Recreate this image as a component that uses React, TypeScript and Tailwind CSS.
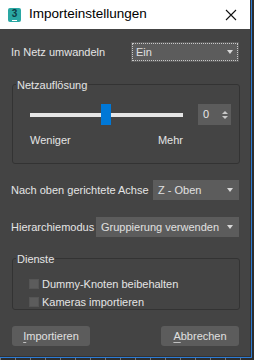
const label = "text-[11px] leading-[14px] text-[#e4e4e4]";

function Combo({ value, width, focus }: { value: string; width: string; focus?: boolean }) {
  return (
    <div
      className={`${width} h-[20px] bg-[#5c5c5c] flex items-center pl-[5px] pr-[6px] ${
        focus ? "outline outline-1 outline-dotted outline-[#c8c8c8] -outline-offset-2" : ""
      }`}
    >
      <span className="text-[11px] text-[#e0e0e0] flex-1 leading-none">{value}</span>
      <span className="w-0 h-0 border-l-[3px] border-r-[3px] border-t-[4px] border-l-transparent border-r-transparent border-t-[#d8d8d8]" />
    </div>
  );
}

function Mnemonic({ first, rest }: { first: string; rest: string }) {
  return (
    <span className="text-[11px] text-[#e0e0e0]">
      <span className="underline underline-offset-2 decoration-[#c0c0c0]">{first}</span>
      {rest}
    </span>
  );
}

function Check({ text }: { text: string }) {
  return (
    <label className="flex items-center gap-[3px] h-[14px]">
      <span className="w-[10px] h-[10px] bg-[#5c5c5c] border border-[#555]" />
      <span className={label}>{text}</span>
    </label>
  );
}

export default function App() {
  return (
    <div
      className="w-[254px] h-[360px] bg-[#2d2d2d] overflow-hidden relative"
      style={{ fontFamily: '"Liberation Sans", Arial, sans-serif' }}
    >
      <div className="w-[252px] h-[358px] border-r border-b border-[#2b7bd6]">
        <div className="w-[251px] h-[357px] border-r border-b border-[#333] flex flex-col">
          {/* title bar */}
          <div className="h-[29px] bg-white flex items-center pl-[8px] pr-[12px] shrink-0">
            <div className="w-[13px] h-[14px] rounded-[2px] bg-[#2aa7a3] flex flex-col items-center justify-center">
              <span className="text-[10px] font-bold text-[#0d3b44] leading-none">3</span>
              <span className="w-[5px] h-[1px] bg-white mt-[1px]" />
            </div>
            <span className="ml-[8px] text-[13.5px] text-black flex-1">Importeinstellungen</span>
            <svg width="12" height="12" viewBox="0 0 12 12" className="mr-[1px]">
              <path d="M1 1 L11 11 M11 1 L1 11" stroke="#111" strokeWidth="1.1" />
            </svg>
          </div>

          {/* body */}
          <div className="flex-1 bg-[#444444] pl-[11px] pr-[11px] pt-[13px]">
            <div className="flex items-center">
              <span className={label}>In Netz umwandeln</span>
              <div className="ml-auto">
                <Combo value="Ein" width="w-[108px]" focus />
              </div>
            </div>

            <div className="relative mt-[22px] ml-[1px] w-[228px] h-[80px] border border-[#333] rounded-[3px]">
              <span className={`absolute -top-[7px] left-[3px] px-[1px] bg-[#444444] ${label}`}>Netzauflösung</span>
              <div className="flex items-center mt-[19px] ml-[17px]">
                <div className="relative w-[153px] h-[21px] flex items-center">
                  <div className="w-full h-[4px] bg-[#e6e6e6]" />
                  <div className="absolute left-[71px] top-0 w-[10px] h-[21px] bg-[#0078d7]" />
                </div>
                <div className="ml-[15px] w-[33px] h-[21px] bg-[#5c5c5c] flex items-center pl-[5px] pr-[3px]">
                  <span className="text-[11px] text-[#e8e8e8] flex-1">0</span>
                  <div className="flex flex-col gap-[2px]">
                    <span className="w-0 h-0 border-l-[3px] border-r-[3px] border-b-[3px] border-l-transparent border-r-transparent border-b-[#c8c8c8]" />
                    <span className="w-0 h-0 border-l-[3px] border-r-[3px] border-t-[3px] border-l-transparent border-r-transparent border-t-[#c8c8c8]" />
                  </div>
                </div>
              </div>
              <div className="flex w-[153px] ml-[17px] mt-[8px] justify-between">
                <span className={label}>Weniger</span>
                <span className={label}>Mehr</span>
              </div>
            </div>

            <div className="flex items-center mt-[16px]">
              <span className={label}>Nach oben gerichtete Achse</span>
              <div className="ml-auto">
                <Combo value="Z - Oben" width="w-[86px]" />
              </div>
            </div>

            <div className="flex items-center mt-[17px]">
              <span className={label}>Hierarchiemodus</span>
              <div className="ml-auto">
                <Combo value="Gruppierung verwenden" width="w-[143px]" />
              </div>
            </div>

            <div className="relative mt-[21px] ml-[1px] w-[228px] h-[52px] border border-[#333] rounded-[3px]">
              <span className={`absolute -top-[7px] left-[3px] px-[1px] bg-[#444444] ${label}`}>Dienste</span>
              <div className="flex flex-col gap-[4px] mt-[18px] ml-[16px]">
                <Check text="Dummy-Knoten beibehalten" />
                <Check text="Kameras importieren" />
              </div>
            </div>

            <div className="flex justify-between mt-[16px] ml-[1px]">
              <button className="w-[78px] h-[20px] bg-[#5c5c5c] rounded-[3px] flex items-center justify-center">
                <Mnemonic first="I" rest="mportieren" />
              </button>
              <button className="w-[78px] h-[20px] bg-[#5c5c5c] rounded-[3px] flex items-center justify-center">
                <Mnemonic first="A" rest="bbrechen" />
              </button>
            </div>
          </div>
        </div>
      </div>
      <div className="absolute left-0 bottom-0 w-[252px] h-[2px] bg-[repeating-linear-gradient(90deg,#777_0_1px,transparent_1px_15px)]" />
    </div>
  );
}
